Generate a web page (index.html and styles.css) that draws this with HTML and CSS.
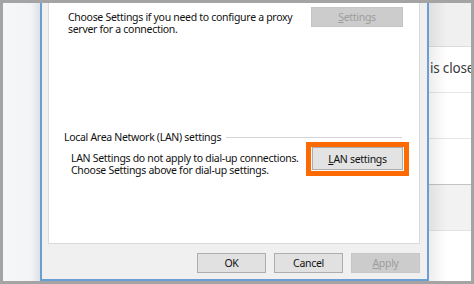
FILE: index.html
```html
<!DOCTYPE html>
<html>
<head>
<meta charset="utf-8">
<link rel="stylesheet" href="styles.css">
</head>
<body>
<div class="frame">
  <div class="left-bg"></div>
  <div class="dialog">
    <div class="panel">
      <div class="row proxy">
        <p class="desc proxy-desc">Choose Settings if you need to configure a proxy<br>server for a connection.</p>
        <button class="btn disabled settings-btn"><u>S</u>ettings</button>
      </div>
      <div class="group">
        <span class="group-label">Local Area Network (LAN) settings</span>
        <span class="rule"></span>
      </div>
      <div class="row lan">
        <p class="desc lan-desc">LAN Settings do not apply to dial-up connections.<br>Choose Settings above for dial-up settings.</p>
        <div class="highlight"><button class="btn lan-btn"><u>L</u>AN settings</button></div>
      </div>
    </div>
    <div class="footer">
      <button class="btn foot-btn">OK</button>
      <button class="btn foot-btn">Cancel</button>
      <button class="btn foot-btn disabled"><u>A</u>pply</button>
    </div>
  </div>
  <div class="right-bg">
    <div class="rrow rtop"></div>
    <div class="rrow"><span class="rtext">is close</span></div>
    <div class="rrow"></div>
    <div class="rrow rdark"></div>
    <div class="rrow rgray"></div>
    <div class="rrow rlast"></div>
  </div>
</div>
</body>
</html>
```

FILE: styles.css
```css
* { box-sizing: border-box; }
html, body { margin: 0; padding: 0; }
body {
  width: 474px;
  height: 284px;
  overflow: hidden;
  font-family: "Noto Sans", "DejaVu Sans", sans-serif;
  font-size: 10.5px;
  color: #111;
}
.frame {
  width: 474px;
  height: 284px;
  border: 3px solid #a4a4a4;
  display: flex;
  overflow: hidden;
}
.left-bg {
  width: 37px;
  flex: none;
  background: linear-gradient(to right, #f6f7f9 0%, #f2f4f6 75%, #dde1e5 100%);
}
.dialog {
  width: 389px;
  flex: none;
  height: 278px;
  background: #f0f0f0;
  border-left: 2px solid #6a9fd6;
  border-right: 2px solid #6a9fd6;
  border-bottom: 2px solid #6a9fd6;
  display: flex;
  flex-direction: column;
}
.panel {
  margin-left: 6px;
  width: 372px;
  height: 241px;
  background: #fff;
  border: 1px solid #dadada;
  border-top: none;
  display: flex;
  flex-direction: column;
}
.row {
  display: flex;
  justify-content: space-between;
  align-items: flex-start;
}
.desc {
  margin: 0;
  line-height: 12px;
  letter-spacing: -0.3px;
  white-space: nowrap;
  flex: none;
}
.proxy-desc {
  margin-top: 7.5px;
  margin-left: 19px;
}
.btn {
  font-family: inherit;
  font-size: 10.5px;
  letter-spacing: -0.3px;
  color: #111;
  background: #e1e1e1;
  border: 1px solid #adadad;
  padding: 0;
  margin: 0;
  line-height: 12px;
  display: flex;
  align-items: center;
  justify-content: center;
  flex: none;
}
.btn u { text-underline-offset: 1px; }
.btn.disabled {
  background: #cccccc;
  border-color: #c6c6c6;
  color: #9d9d9d;
}
.settings-btn {
  width: 92px;
  height: 20px;
  margin-top: 4px;
  margin-right: 16px;
}
.group {
  margin-top: 96px;
  margin-left: 15px;
  margin-right: 17px;
  display: flex;
  align-items: center;
  height: 12px;
  line-height: 12px;
  letter-spacing: -0.3px;
}
.group-label { white-space: nowrap; }
.rule {
  flex: 1;
  height: 1px;
  background: #d4d4d4;
  margin-left: 5px;
  margin-top: 1px;
}
.lan-desc {
  margin-top: 9px;
  margin-left: 22px;
}
.highlight {
  flex: none;
  margin-top: -0.5px;
  margin-right: 10px;
  width: 103px;
  height: 34px;
  border: 5px solid #fd6a02;
  padding: 0 0 0 1px;
  background: #fbfbfb;
}
.lan-btn {
  width: 91px;
  height: 23px;
  background: #e3e3e3;
}
.footer {
  display: flex;
  justify-content: flex-end;
  gap: 8px;
  padding-top: 9px;
  padding-right: 7px;
}
.foot-btn {
  width: 69px;
  height: 20px;
}
.right-bg {
  flex: 1;
  position: relative;
  display: flex;
  flex-direction: column;
  overflow: hidden;
}
.right-bg::after {
  content: "";
  position: absolute;
  left: 0; top: 0; bottom: 0;
  width: 18px;
  background: linear-gradient(to right, rgba(0,0,0,0.07), rgba(0,0,0,0));
  pointer-events: none;
}
.rrow {
  height: 46px;
  flex: none;
  background: #fff;
  border-bottom: 1px solid #e6e6e6;
}
.rtop {
  height: 44px;
  background: #f0f0f0;
  border-bottom-color: #dcdcdc;
}
.rdark { border-bottom-color: #c4c4c4; }
.rgray { background: #f2f2f2; border-bottom-color: #e2e2e2; }
.rlast { flex: 1; border-bottom: none; }
.rtext {
  display: block;
  padding-top: 13px;
  padding-left: 1px;
  font-size: 13.5px;
  letter-spacing: -0.2px;
  line-height: 16px;
  color: #3a3a3a;
  white-space: nowrap;
}
```
